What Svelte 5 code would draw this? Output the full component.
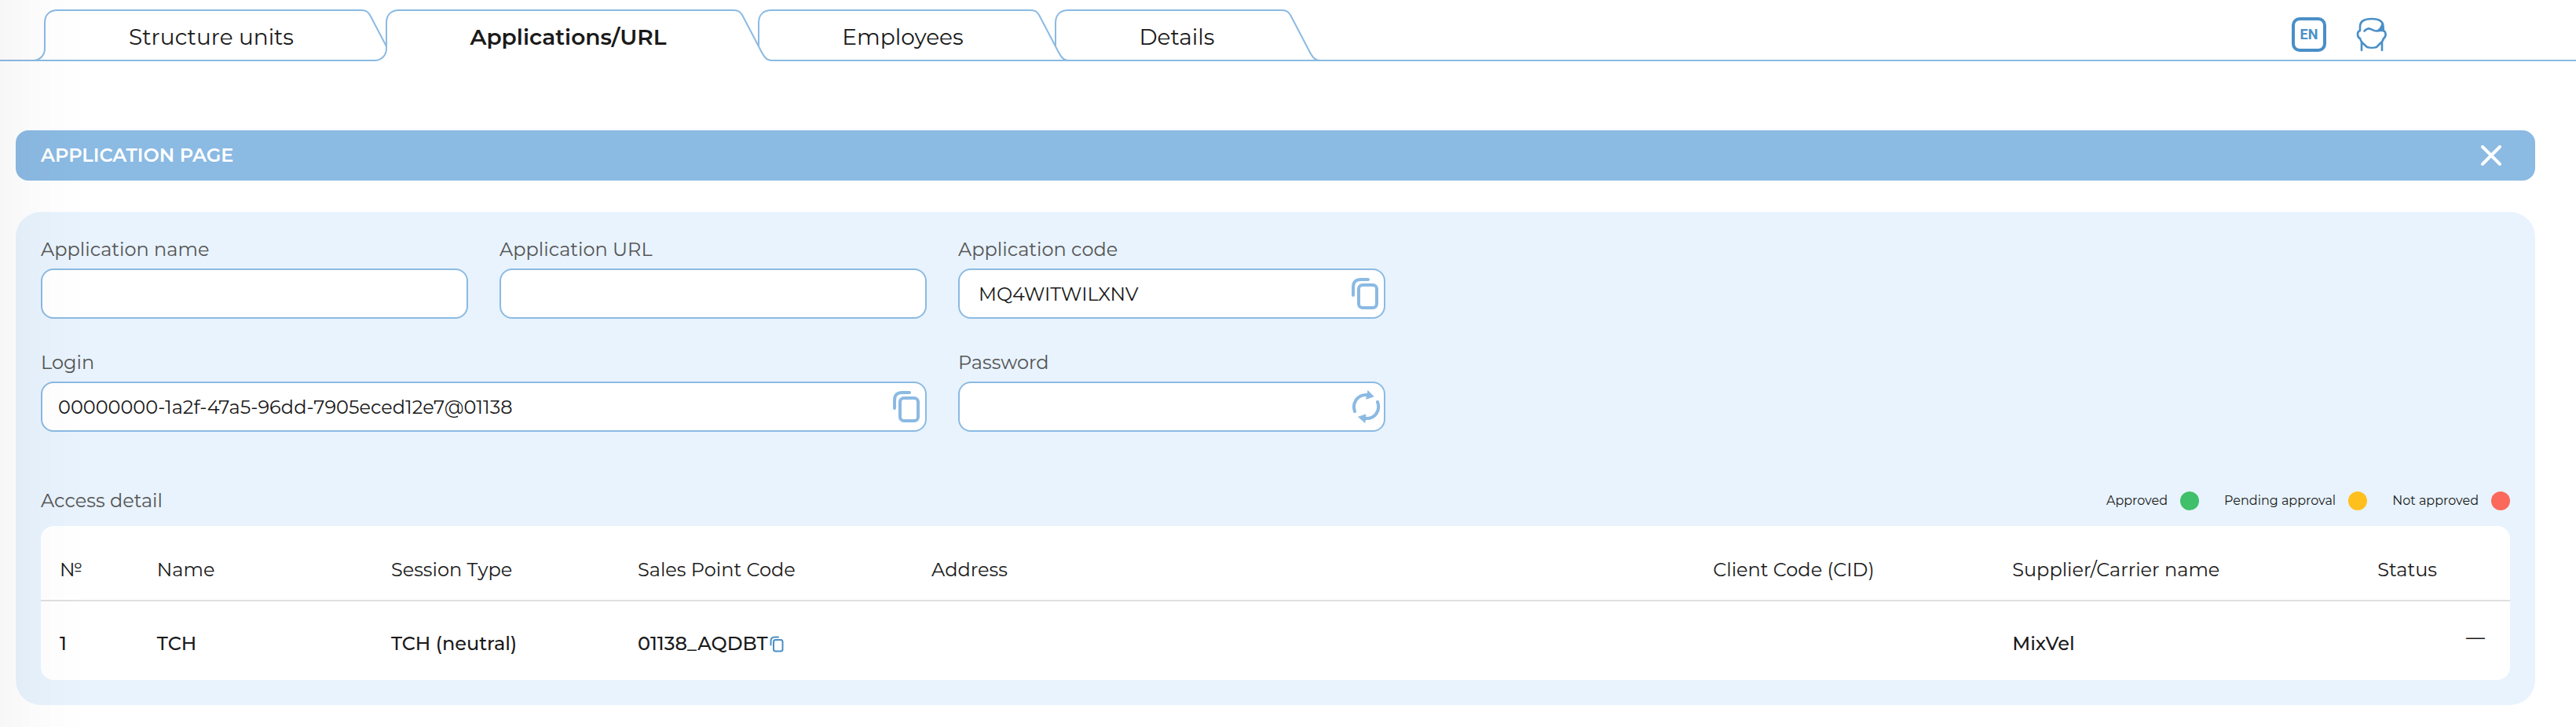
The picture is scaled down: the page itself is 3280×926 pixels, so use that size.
<script lang="ts">
	interface Tab {
		id: string;
		label: string;
	}

	interface AccessRow {
		name: string;
		sessionType: string;
		salesPoint: string;
		address: string;
		clientCode: string;
		supplier: string;
		status: string;
	}

	const tabs: Tab[] = [
		{ id: 'units', label: 'Structure units' },
		{ id: 'applications', label: 'Applications/URL' },
		{ id: 'employees', label: 'Employees' },
		{ id: 'details', label: 'Details' }
	];

	const legend = [
		{ kind: 'approved', label: 'Approved' },
		{ kind: 'pending', label: 'Pending approval' },
		{ kind: 'rejected', label: 'Not approved' }
	];

	const rows: AccessRow[] = [
		{
			name: 'TCH',
			sessionType: 'TCH (neutral)',
			salesPoint: '01138_AQDBT',
			address: '',
			clientCode: '',
			supplier: 'MixVel',
			status: '—'
		}
	];

	let activeTab = $state('applications');
	let appName = $state('');
	let appUrl = $state('');
	let appCode = $state('MQ4WITWILXNV');
	let login = $state('00000000-1a2f-47a5-96dd-7905eced12e7@01138');
	let password = $state('');

	function copy(text: string) {
		navigator.clipboard?.writeText(text);
	}

	function generatePassword() {
		password = Math.random().toString(36).slice(2, 12);
	}
</script>

{#snippet copyIcon()}
	<svg viewBox="0 0 36 42" fill="none" stroke="currentColor" stroke-linecap="round" aria-hidden="true">
		<path d="M3 23V13C3 6 6 3 13 3H22" />
		<rect x="10" y="10" width="23" height="29" rx="5" />
	</svg>
{/snippet}

<header>
	<nav>
		{#each tabs as tab, i (tab.id)}
			<button
				class="tab tab-{i}"
				class:active={tab.id === activeTab}
				onclick={() => (activeTab = tab.id)}
			>
				<svg class="edge-left" viewBox="0 0 31 66" aria-hidden="true">
					<path class="fill" d="M0 65C9 65 15 58 15 50V17C15 6 22 1 31 1V64H0Z" />
					<path class="cover" d="M0 64H31V66H0Z" />
					<path class="line" d="M0 65C9 65 15 58 15 50V17C15 6 22 1 31 1" />
				</svg>
				<span class="tab-label">{tab.label}</span>
				<svg class="edge-right" viewBox="0 0 50 66" aria-hidden="true">
					<path class="fill" d="M0 1C6 1 9 2 12 7L34 49C38 57 41 64 49 64H0Z" />
					<path class="cover" d="M0 64H48V66H0Z" />
					<path class="line" d="M0 1C6 1 9 2 12 7L34 49C39 59 42 65 50 65" />
				</svg>
			</button>
		{/each}
	</nav>
	<div class="tools">
		<button class="language">EN</button>
		<button class="profile" aria-label="Profile">
			<svg viewBox="0 0 40 44" fill="none" stroke="currentColor" stroke-width="2.6" stroke-linecap="round" stroke-linejoin="round">
				<path d="M5 17V12C5 5 10 2 20 2C30 2 34.500 5 34.500 12V17C38.500 18 38.500 25 35 27C34 30 33 32 31 33L26 38C23 39 17 39 14 38L8.500 33C6.500 31 5.500 29 5 27C1 25 1 18 5 17Z" />
				<path d="M10.500 17.500C17 10.500 20 17.500 26 17.500C30 17.500 32 16 34 15" />
				<path d="M33.500 8C33 12 31 15 28 17L34.500 17Z" fill="currentColor" />
				<path d="M7 32V42M33 32V42" />
			</svg>
		</button>
	</div>
</header>

<main>
	<div class="banner">
		<h1>APPLICATION PAGE</h1>
		<button class="close" aria-label="Close">
			<svg viewBox="0 0 26 26" fill="none" stroke="currentColor" stroke-width="4" stroke-linecap="round">
				<path d="M2 2L24 24M24 2L2 24" />
			</svg>
		</button>
	</div>

	<section class="panel">
		<form onsubmit={(e) => e.preventDefault()}>
			<div class="field">
				<label for="app-name">Application name</label>
				<input id="app-name" type="text" bind:value={appName} />
			</div>
			<div class="field">
				<label for="app-url">Application URL</label>
				<input id="app-url" type="text" bind:value={appUrl} />
			</div>
			<div class="field">
				<label for="app-code">Application code</label>
				<div class="control">
					<input id="app-code" class="code" type="text" bind:value={appCode} />
					<button type="button" class="action" aria-label="Copy code" onclick={() => copy(appCode)}>
						{@render copyIcon()}
					</button>
				</div>
			</div>
			<div class="field wide">
				<label for="login">Login</label>
				<div class="control">
					<input id="login" type="text" bind:value={login} />
					<button type="button" class="action" aria-label="Copy login" onclick={() => copy(login)}>
						{@render copyIcon()}
					</button>
				</div>
			</div>
			<div class="field">
				<label for="password">Password</label>
				<div class="control">
					<input id="password" type="text" bind:value={password} />
					<button type="button" class="action" aria-label="Generate password" onclick={generatePassword}>
						<svg viewBox="0 0 36 42" fill="none" stroke="currentColor" stroke-linecap="round" aria-hidden="true">
							<path class="thin" d="M5 27C1 16 9 5 21 6M34 15C38 26 31 37 18 36" />
							<path d="M22 1L29 8L20 11ZM10 34L19 31L18 41Z" fill="currentColor" stroke-width="1" />
						</svg>
					</button>
				</div>
			</div>
		</form>

		<div class="access-head">
			<h2>Access detail</h2>
			<ul>
				{#each legend as item (item.kind)}
					<li>{item.label}<span class="dot {item.kind}"></span></li>
				{/each}
			</ul>
		</div>

		<table>
			<colgroup>
				<col class="col-number" />
				<col class="col-name" />
				<col class="col-session" />
				<col class="col-sales" />
				<col class="col-address" />
				<col class="col-client" />
				<col class="col-supplier" />
				<col />
			</colgroup>
			<thead>
				<tr>
					<th>№</th>
					<th>Name</th>
					<th>Session Type</th>
					<th>Sales Point Code</th>
					<th>Address</th>
					<th>Client Code (CID)</th>
					<th>Supplier/Carrier name</th>
					<th>Status</th>
				</tr>
			</thead>
			<tbody>
				{#each rows as row, i (row.salesPoint)}
					<tr>
						<td>{i + 1}</td>
						<td>{row.name}</td>
						<td>{row.sessionType}</td>
						<td>
							<div class="sales-point">
								{row.salesPoint}
								<button aria-label="Copy sales point code" onclick={() => copy(row.salesPoint)}>
									{@render copyIcon()}
								</button>
							</div>
						</td>
						<td>{row.address}</td>
						<td>{row.clientCode}</td>
						<td>{row.supplier}</td>
						<td class="status">{row.status}</td>
					</tr>
				{/each}
			</tbody>
		</table>
	</section>
</main>

<style>
	:global(body) {
		position: relative;
		background: #fff;
		color: #1a1a1a;
		font-family: Montserrat, Inter, 'Open Sans', sans-serif;
		font-size: 24px;
		line-height: 32px;
	}

	:global(body)::after {
		content: '';
		position: fixed;
		inset: 0 auto 0 0;
		width: 110px;
		background: linear-gradient(to right, rgba(0, 0, 0, 0.03), rgba(0, 0, 0, 0.01) 50%, rgba(0, 0, 0, 0));
		pointer-events: none;
		z-index: 10;
	}

	button {
		padding: 0;
		border: 0;
		background: none;
		color: inherit;
		font: inherit;
		cursor: pointer;
	}

	svg {
		display: block;
	}

	header {
		display: flex;
		justify-content: space-between;
		padding: 12px 240px 0 57px;
		border-bottom: 2px solid #8bbae3;
	}

	nav {
		display: grid;
		grid-template-columns: 435px 474px 378px 320px;
		margin-bottom: -2px;
	}

	.tab {
		position: relative;
		height: 66px;
		font-size: 28px;
	}

	.tab-0 {
		z-index: 4;
	}

	.tab-1 {
		z-index: 3;
	}

	.tab-2 {
		z-index: 2;
	}

	.tab-3 {
		z-index: 1;
	}

	.tab.active {
		z-index: 5;
		font-weight: 600;
	}

	.tab-label {
		display: flex;
		align-items: center;
		justify-content: center;
		height: 64px;
		margin: 0 33px 0 16px;
		padding: 4px 0 0 6px;
		border-top: 2px solid #8bbae3;
		background: #fff;
		box-sizing: border-box;
	}

	.active .tab-label {
		height: 66px;
		padding-bottom: 2px;
	}

	.tab:not(.active) .tab-label {
		margin-bottom: 2px;
	}

	.edge-left,
	.edge-right {
		position: absolute;
		top: 0;
		height: 66px;
	}

	.edge-left {
		left: -15px;
		width: 31px;
	}

	.edge-right {
		right: -17px;
		width: 50px;
	}

	.fill {
		fill: #fff;
	}

	.cover {
		fill: none;
	}

	.active .cover {
		fill: #fff;
	}

	.line {
		fill: none;
		stroke: #8bbae3;
		stroke-width: 2;
	}

	.tools {
		display: flex;
		align-items: flex-start;
		gap: 38px;
		padding-top: 10px;
		color: #4a8fc7;
	}

	.language {
		width: 44px;
		height: 44px;
		border: 4px solid currentColor;
		border-radius: 10px;
		font-family: 'Liberation Sans Narrow', Roboto, sans-serif;
		font-size: 18px;
		font-weight: 700;
		line-height: 36px;
	}

	.profile svg {
		width: 40px;
		height: 44px;
	}

	main {
		padding: 88px 52px 28px 20px;
	}

	.banner {
		display: flex;
		align-items: center;
		justify-content: space-between;
		height: 64px;
		padding: 0 43px 0 32px;
		border-radius: 16px;
		background: #8bbae3;
		color: #fff;
	}

	h1,
	h2 {
		margin: 0;
		font-size: 24px;
		font-weight: 600;
	}

	.close svg {
		width: 26px;
		height: 26px;
	}

	.panel {
		margin-top: 40px;
		padding: 32px;
		border-radius: 32px;
		background: #e8f3fd;
	}

	form {
		display: grid;
		grid-template-columns: repeat(3, minmax(0, 544px));
		gap: 40px;
	}

	.field {
		display: flex;
		flex-direction: column;
		gap: 8px;
	}

	.wide {
		grid-column: span 2;
	}

	label,
	h2 {
		color: #555;
		font-weight: 400;
	}

	.control {
		position: relative;
	}

	input {
		display: block;
		width: 100%;
		height: 64px;
		padding: 0 56px 0 20px;
		border: 2px solid #8bbae3;
		border-radius: 16px;
		background: #fff;
		color: inherit;
		font: inherit;
		box-sizing: border-box;
	}

	.code {
		padding-left: 24px;
	}

	.action {
		position: absolute;
		top: 11px;
		right: 8px;
		color: #8bbae3;
	}

	.action svg {
		width: 36px;
		height: 42px;
		stroke-width: 4;
		overflow: visible;
	}

	.access-head {
		display: flex;
		align-items: center;
		justify-content: space-between;
		margin: 72px 0 16px;
	}

	ul {
		display: flex;
		gap: 32px;
		margin: 0;
		padding: 0;
		font-size: 16px;
		list-style: none;
	}

	li {
		display: flex;
		align-items: center;
		gap: 16px;
	}

	.dot {
		width: 24px;
		height: 24px;
		border-radius: 50%;
	}

	.approved {
		background: #40c06a;
	}

	.pending {
		background: #ffc01e;
	}

	.rejected {
		background: #fa695b;
	}

	table {
		width: 100%;
		border-radius: 16px;
		border-spacing: 0;
		background: #fff;
		table-layout: fixed;
	}

	.col-number {
		width: 3.94%;
	}

	.col-name {
		width: 9.48%;
	}

	.col-session {
		width: 9.99%;
	}

	.col-sales {
		width: 11.9%;
	}

	.col-address {
		width: 31.65%;
	}

	.col-client {
		width: 12.12%;
	}

	.col-supplier {
		width: 14.79%;
	}

	th,
	td {
		padding: 40px 0 22px 24px;
		text-align: left;
		white-space: nowrap;
	}

	th {
		border-bottom: 2px solid #e0e0e0;
		font-weight: 400;
	}

	td {
		padding: 38px 0 30px 24px;
		font-weight: 500;
	}

	.sales-point {
		display: flex;
		align-items: center;
		gap: 3px;
	}

	.sales-point button {
		color: #4a8fc7;
	}

	.sales-point svg {
		width: 18px;
		height: 21px;
		stroke-width: 4;
	}

	.status {
		padding-right: 32px;
		line-height: 16px;
		text-align: right;
		vertical-align: top;
	}
</style>
